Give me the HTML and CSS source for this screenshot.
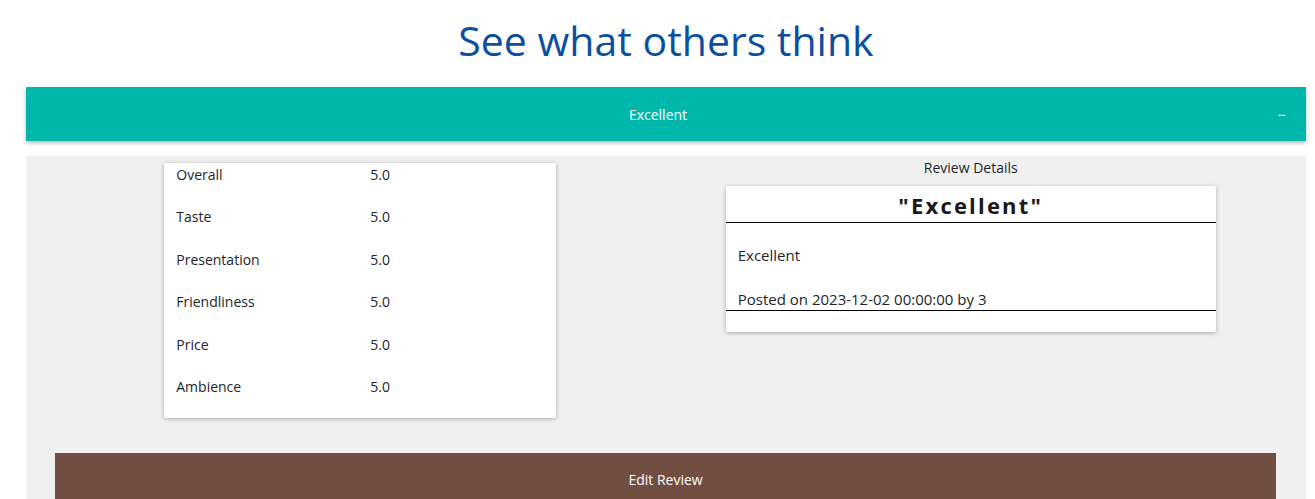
FILE: index.html
```html
<!DOCTYPE html>
<html lang="en">
<head>
<meta charset="utf-8">
<title>See what others think</title>
<link rel="stylesheet" href="styles.css">
</head>
<body>
<div class="page">
  <h1 class="title">See what others think</h1>
  <div class="acc-header">
    <span class="acc-label">Excellent</span>
    <span class="acc-icon">&minus;</span>
  </div>
  <div class="panel">
    <div class="columns">
      <div class="col">
        <div class="card ratings">
          <div class="row"><span class="label">Overall</span><span class="val">5.0</span></div>
          <div class="row"><span class="label">Taste</span><span class="val">5.0</span></div>
          <div class="row"><span class="label">Presentation</span><span class="val">5.0</span></div>
          <div class="row"><span class="label">Friendliness</span><span class="val">5.0</span></div>
          <div class="row"><span class="label">Price</span><span class="val">5.0</span></div>
          <div class="row"><span class="label">Ambience</span><span class="val">5.0</span></div>
        </div>
      </div>
      <div class="col">
        <div class="details-title">Review Details</div>
        <div class="card review">
          <div class="review-head">"Excellent"</div>
          <div class="review-body">
            <p class="review-text">Excellent</p>
            <p class="review-meta">Posted on 2023-12-02 00:00:00 by 3</p>
          </div>
        </div>
      </div>
    </div>
    <button class="edit-btn">Edit Review</button>
  </div>
</div>
</body>
</html>
```
FILE: styles.css
```css
html, body {
  margin: 0;
  padding: 0;
  background: #fff;
}
body {
  font-family: "Open Sans", "Noto Sans", sans-serif;
  color: #212529;
  font-size: 14px;
}
.page {
  width: 1280px;
  margin-left: 26px;
}
.title {
  margin: 0;
  height: 87px;
  line-height: 80px;
  text-align: center;
  font-size: 41px;
  font-weight: 400;
  color: #0b4f9e;
}
.acc-header {
  height: 54px;
  background: #00b8a9;
  color: #fff;
  display: flex;
  align-items: center;
  padding: 0 16px;
  box-shadow: 0 2px 4px rgba(0, 0, 0, 0.28);
}
.acc-label {
  flex: 1;
  text-align: center;
  font-size: 14px;
}
.acc-icon {
  width: 16px;
  text-align: center;
  font-size: 14px;
}
.panel {
  margin-top: 15px;
  background: #f0f0f0;
  padding: 0 30px 0 29px;
  height: 400px;
}
.columns {
  display: grid;
  grid-template-columns: 1fr 1fr;
}
.col {
  display: flex;
  flex-direction: column;
  align-items: center;
}
.card {
  background: #fff;
  border-radius: 2px;
  box-shadow: 0 1px 4px rgba(0, 0, 0, 0.3);
}
.ratings {
  width: 392px;
  margin-top: 7px;
  padding-top: 1px;
}
.row {
  display: flex;
  padding-left: 12px;
  line-height: 22px;
  margin-bottom: 20.4px;
}
.label {
  width: 194px;
}
.details-title {
  line-height: 24px;
  height: 24px;
  margin-bottom: 6px;
}
.review {
  width: 490px;
  padding-bottom: 21px;
}
.review-head {
  height: 36px;
  line-height: 38px;
  text-align: center;
  font-size: 22px;
  font-weight: 700;
  letter-spacing: 2.2px;
  border-bottom: 1px solid #000;
  color: #1a1a1a;
}
.review-body {
  padding: 21px 12px 0;
  border-bottom: 1px solid #000;
  font-size: 15px;
}
.review-text, .review-meta {
  margin: 0;
  line-height: 22px;
}
.review-meta {
  margin-top: 22px;
}
.edit-btn {
  display: block;
  width: 100%;
  margin-top: 35px;
  height: 52px;
  border: none;
  background: #714d42;
  color: #fff;
  font-family: inherit;
  font-size: 14px;
}
```
